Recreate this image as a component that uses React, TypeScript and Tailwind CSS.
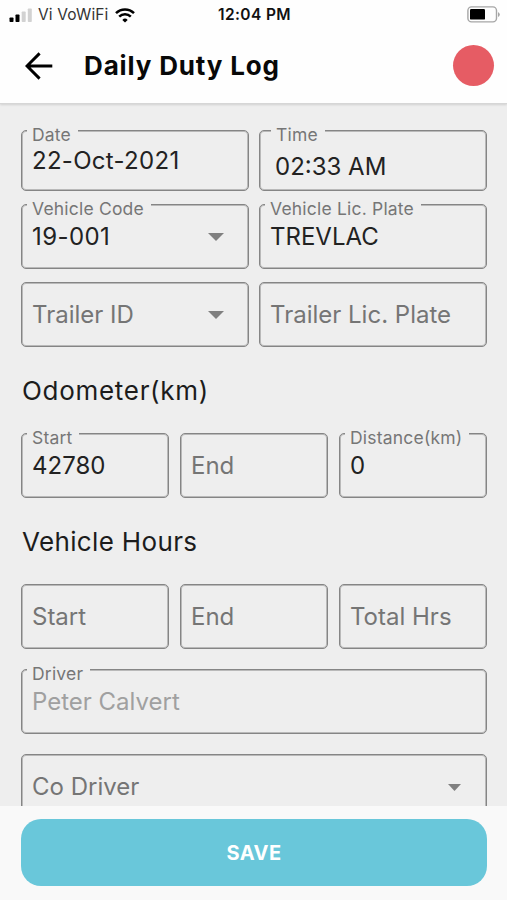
import { clsx } from 'clsx'

interface FieldProps {
  label?: string
  text: string
  tone?: 'value' | 'placeholder' | 'disabled'
  caret?: boolean
  caretClass?: string
  className?: string
  labelClass?: string
  textClass?: string
}

const Field = ({
  label,
  text,
  tone = 'value',
  caret = false,
  caretClass = 'mt-px mr-[24px] h-[8px] w-[16px]',
  className = 'h-[65px]',
  labelClass = 'left-[5px]',
  textClass = '',
}: FieldProps) => (
  <div
    className={clsx(
      'relative flex items-center justify-between rounded-[5px] border border-[#858585] pl-[10px] shadow-[inset_0_0_0_1px_#b9b9b9]',
      className,
    )}
  >
    {label && (
      <span
        className={clsx(
          'absolute -top-[6px] bg-[#eeeeee] pr-[7px] pl-[5px] text-[17.5px] leading-[19px] tracking-[0.2px] whitespace-nowrap text-[#767676]',
          labelClass,
        )}
      >
        {label}
      </span>
    )}
    <span
      className={clsx(
        'relative text-2xl leading-7 whitespace-nowrap',
        tone === 'value' && 'text-[#222222]',
        tone === 'placeholder' && 'text-[#757575]',
        tone === 'disabled' && 'text-[#a0a0a0]',
        textClass,
      )}
    >
      {text}
    </span>
    {caret && (
      <svg viewBox="0 0 16 9" preserveAspectRatio="none" className={caretClass}>
        <path d="M0 0h16L8 9z" fill="#808080" />
      </svg>
    )}
  </div>
)

const StatusBar = () => (
  <div className="grid h-[30px] grid-cols-3 items-center pr-[7px] pl-[9px]">
    <div className="flex items-center">
      <svg width="24" height="15" viewBox="0 0 24 15">
        <rect x="0.5" y="9.5" width="4" height="4.5" rx="0.8" fill="#000" />
        <rect x="6.5" y="6.5" width="4" height="7.5" rx="0.8" fill="#000" />
        <rect x="12.7" y="3.5" width="4" height="10.5" rx="0.8" fill="#d2d2d2" />
        <rect x="18.8" y="0.5" width="4" height="13.5" rx="0.8" fill="#d2d2d2" />
      </svg>
      <span className="ml-[5px] text-[15.5px] tracking-[0.15px] whitespace-nowrap text-[#333333]">
        Vi VoWiFi
      </span>
      <svg width="20" height="15" viewBox="0 0 20 15" className="ml-[6px] shrink-0">
        <path
          d="M1 5.2a12.8 12.8 0 0 1 18 0M4.2 8.6a8.3 8.3 0 0 1 11.6 0"
          fill="none"
          stroke="#000"
          strokeWidth="2.5"
        />
        <path d="M7.3 11.9a3.9 3.9 0 0 1 5.4 0L10 14.6z" fill="#000" />
      </svg>
    </div>
    <div className="text-center text-[15.5px] font-semibold tracking-[0.4px] whitespace-nowrap text-[#111111]">
      12:04 PM
    </div>
    <svg width="33" height="17" viewBox="0 0 33 17" className="mt-[-2px] justify-self-end">
      <rect
        x="0.9"
        y="0.9"
        width="28.6"
        height="15"
        rx="3.6"
        fill="none"
        stroke="#a6a6a6"
        strokeWidth="1.4"
      />
      <rect x="3" y="3" width="15" height="10.6" rx="1.2" fill="#000" />
      <path d="M31 6v5q1.8-1 1.8-2.5T31 6z" fill="#a6a6a6" />
    </svg>
  </div>
)

const SectionTitle = ({
  children,
  className,
}: {
  children: string
  className: string
}) => (
  <h2
    className={clsx(
      'flex h-[86px] items-center pt-px pl-px text-[26px] text-[#1c1c1c]',
      className,
    )}
  >
    {children}
  </h2>
)

export default function App() {
  return (
    <div className="flex h-[900px] w-[507px] flex-col overflow-hidden bg-[#eeeeee] font-['Inter','Liberation_Sans',sans-serif]">
      <header className="h-[104px] shrink-0 border-b border-[#d6d6d6] bg-[#fefefe] shadow-[0_1px_2px_rgba(0,0,0,0.12)]">
        <StatusBar />
        <div className="flex h-[71px] items-center pr-[13px] pl-[25px]">
          <svg width="28" height="28" viewBox="0 0 28 28">
            <path
              d="M27.3 14H2.4M14.6 1.4L2 14l12.6 12.6"
              fill="none"
              stroke="#000"
              strokeWidth="2.9"
            />
          </svg>
          <h1 className="ml-[31px] text-[26px] font-bold tracking-[0.85px] text-[#080808]">
            Daily Duty Log
          </h1>
          <div className="ml-auto size-[41px] rounded-full bg-[#e65c64]" />
        </div>
      </header>

      <main className="min-h-0 flex-1 overflow-hidden pt-[26px] pr-5 pl-[21px]">
        <div className="grid grid-cols-2 gap-x-2.5">
          <Field
            label="Date"
            text="22-Oct-2021"
            className="h-[61px]"
            textClass="tracking-[0.3px]"
          />
          <Field
            label="Time"
            text="02:33 AM"
            className="h-[61px] pt-[13px]"
            labelClass="left-[11px]"
            textClass="ml-[5px]"
          />
        </div>
        <div className="mt-[13px] grid grid-cols-2 gap-x-2.5 gap-y-[13px]">
          <Field
            label="Vehicle Code"
            text="19-001"
            textClass="tracking-[0.4px]"
            caret
          />
          <Field label="Vehicle Lic. Plate" text="TREVLAC" />
          <Field text="Trailer ID" tone="placeholder" caret />
          <Field text="Trailer Lic. Plate" tone="placeholder" />
        </div>

        <SectionTitle className="tracking-[0.7px]">Odometer(km)</SectionTitle>
        <div className="grid grid-cols-3 gap-x-[11px]">
          <Field label="Start" text="42780" />
          <Field text="End" tone="placeholder" />
          <Field label="Distance(km)" text="0" />
        </div>

        <SectionTitle className="tracking-[0.35px]">Vehicle Hours</SectionTitle>
        <div className="grid grid-cols-3 gap-x-[11px]">
          <Field text="Start" tone="placeholder" />
          <Field text="End" tone="placeholder" />
          <Field text="Total Hrs" tone="placeholder" />
        </div>

        <div className="mt-5 flex flex-col gap-5">
          <Field label="Driver" text="Peter Calvert" tone="disabled" />
          <Field
            text="Co Driver"
            tone="placeholder"
            caret
            caretClass="mt-px mr-[25px] h-[7px] w-[13px]"
          />
        </div>
      </main>

      <footer className="h-[94px] shrink-0 bg-[#f9f9f9] pt-[13px] pr-5 pl-[21px]">
        <button className="flex h-[67px] w-full items-center justify-center rounded-[20px] bg-[#69c7da] text-xl font-bold tracking-[0.5px] text-white">
          SAVE
        </button>
      </footer>
    </div>
  )
}
